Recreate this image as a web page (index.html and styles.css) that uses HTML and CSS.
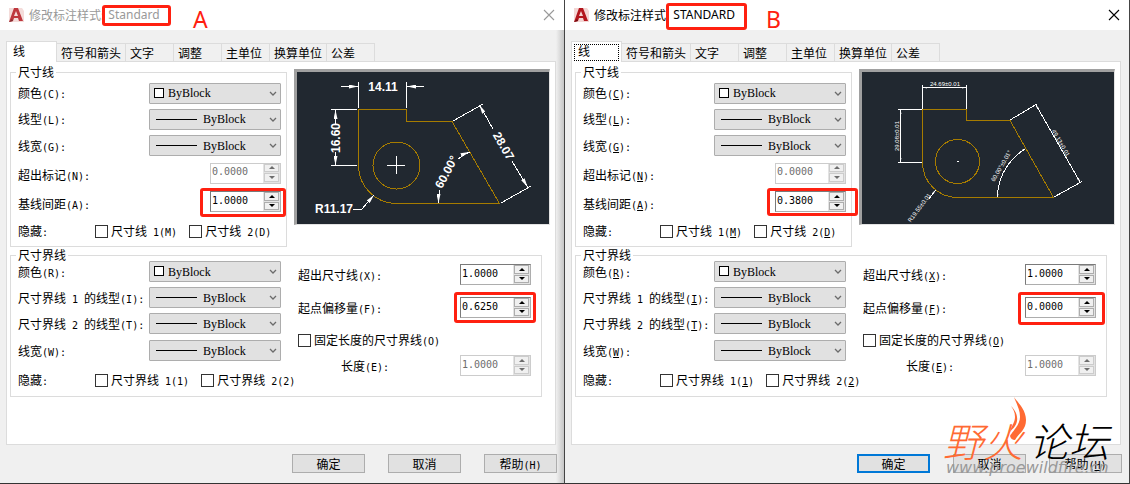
FILE: index.html
```html
<!DOCTYPE html>
<html lang="zh-CN">
<head>
    <meta charset="UTF-8" />
    <title>修改标注样式</title>
    <link rel="stylesheet" href="styles.css">
</head>
<body>
    <!-- shared icons -->
    <svg class="defs" aria-hidden="true">
        <symbol id="logo" viewBox="0 0 16 16">
            <path d="M1 1h13l2 3v11H1z" fill="#f3d6d4"/>
            <path d="M1 15L6 1h4l5 13h-4l-1-3H6l-1 3z" fill="#b3161d"/>
            <path d="M8 4l2 5H6z" fill="#f3d6d4"/>
            <path d="M1 15l3-3 1 2z" fill="#6e0b10"/>
        </symbol>
        <symbol id="chevron" viewBox="0 0 8 6">
            <path d="M1 1l3 3 3-3" fill="none" stroke="#6b6b6b" stroke-width="1.3"/>
        </symbol>
        <symbol id="cross" viewBox="0 0 12 12">
            <path d="M1 1l10 10M11 1L1 11" fill="none" stroke="currentColor" stroke-width="1.1"/>
        </symbol>
        <marker id="arrow" viewBox="0 0 9 4" refX="9" refY="2" markerWidth="9" markerHeight="4" markerUnits="userSpaceOnUse" orient="auto-start-reverse">
            <path d="M0 0l9 2-9 2z" fill="#fff"/>
        </marker>
        <marker id="tick" viewBox="0 0 4 2" refX="4" refY="1" markerWidth="4" markerHeight="2" markerUnits="userSpaceOnUse" orient="auto-start-reverse">
            <path d="M0 0l4 1-4 1z" fill="#fff"/>
        </marker>
    </svg>

    <main class="desktop">
        <section class="dialog inactive">
            <header class="titlebar">
                <svg class="logo"><use href="#logo"/></svg>
                <h1>修改标注样式:</h1>
                <span class="style-name">Standard<i class="mark mark-title"></i></span>
                <span class="letter">A</span>
                <button class="close" aria-label="关闭"><svg><use href="#cross"/></svg></button>
            </header>
            <nav class="tabs">
                <button class="tab current">线</button>
                <button class="tab">符号和箭头</button>
                <button class="tab">文字</button>
                <button class="tab">调整</button>
                <button class="tab">主单位</button>
                <button class="tab">换算单位</button>
                <button class="tab">公差</button>
            </nav>
            <div class="panel">
                <div class="top">
                    <div class="group dim-lines">
                        <h2>尺寸线</h2>
                        <div class="row">
                            <label for="a-color">颜色<span class="en">(C):</span></label>
                            <div class="combo color"><select id="a-color"><option>ByBlock</option></select><i class="swatch"></i><svg><use href="#chevron"/></svg></div>
                        </div>
                        <div class="row">
                            <label for="a-type">线型<span class="en">(L):</span></label>
                            <div class="combo"><select id="a-type"><option>ByBlock</option></select><i class="line"></i><svg><use href="#chevron"/></svg></div>
                        </div>
                        <div class="row">
                            <label for="a-weight">线宽<span class="en">(G):</span></label>
                            <div class="combo"><select id="a-weight"><option>ByBlock</option></select><i class="line"></i><svg><use href="#chevron"/></svg></div>
                        </div>
                        <div class="row low">
                            <label for="a-beyond">超出标记<span class="en">(N):</span></label>
                            <div class="spin off"><input id="a-beyond" type="text" value="0.0000" disabled><div class="steps"><button disabled aria-label="增加"></button><button disabled aria-label="减少"></button></div></div>
                        </div>
                        <div class="row low">
                            <label for="a-base">基线间距<span class="en">(A):</span></label>
                            <div class="spin"><input id="a-base" type="text" value="1.0000"><div class="steps"><button aria-label="增加"></button><button aria-label="减少"></button></div><i class="mark mark-base"></i></div>
                        </div>
                        <div class="row checks">
                            <span class="hide">隐藏<span class="en">:</span></span>
                            <label><input type="checkbox">尺寸线<span class="en"> 1(M)</span></label>
                            <label><input type="checkbox">尺寸线<span class="en"> 2(D)</span></label>
                        </div>
                    </div>
                    <svg class="preview" viewBox="0 0 252 152">
                        <g class="part">
                            <path d="M61.5 93.5V37.5H109.5V49.5H155L202.5 131.5H99.5A38 38 0 0 1 61.5 93.5z"/>
                            <circle cx="99.5" cy="93.5" r="23.5"/>
                        </g>
                        <g class="dims">
                            <path d="M90 93.5h18M99.5 84v18"/>
                            <path d="M61.5 10v26M109.5 10v26M34 37.5h26M34 93.5h26"/>
                            <path d="M44 14.5h17" marker-end="url(#arrow)"/>
                            <path d="M127 14.5h-17" marker-end="url(#arrow)"/>
                            <path d="M38.5 52V38" marker-end="url(#arrow)"/>
                            <path d="M38.5 80v13" marker-end="url(#arrow)"/>
                            <path d="M56 137h9L77 123" marker-end="url(#arrow)"/>
                            <path d="M156 49L186 32M204 131L234 114"/>
                            <path d="M196 57L182.5 33" marker-end="url(#arrow)"/>
                            <path d="M215 89L230.5 115" marker-end="url(#arrow)"/>
                            <path d="M143 118Q141.5 124 141.5 131" marker-end="url(#arrow)"/>
                            <path d="M161 87Q167 82 172.5 80" marker-end="url(#arrow)"/>
                        </g>
                        <g class="big">
                            <text x="86" y="19">14.11</text>
                            <text transform="translate(43 66) rotate(-90)">16.60</text>
                            <text x="37" y="141">R11.17</text>
                            <text transform="translate(203 76) rotate(60)">28.07</text>
                            <text transform="translate(153 102) rotate(-62)">60.00°</text>
                        </g>
                    </svg>
                </div>
                <div class="group ext-lines">
                    <h2>尺寸界线</h2>
                    <div class="col">
                        <div class="row">
                            <label for="a-ecolor">颜色<span class="en">(R):</span></label>
                            <div class="combo color"><select id="a-ecolor"><option>ByBlock</option></select><i class="swatch"></i><svg><use href="#chevron"/></svg></div>
                        </div>
                        <div class="row">
                            <label for="a-etype1">尺寸界线<span class="en"> 1 </span>的线型<span class="en">(I):</span></label>
                            <div class="combo"><select id="a-etype1"><option>ByBlock</option></select><i class="line"></i><svg><use href="#chevron"/></svg></div>
                        </div>
                        <div class="row">
                            <label for="a-etype2">尺寸界线<span class="en"> 2 </span>的线型<span class="en">(T):</span></label>
                            <div class="combo"><select id="a-etype2"><option>ByBlock</option></select><i class="line"></i><svg><use href="#chevron"/></svg></div>
                        </div>
                        <div class="row">
                            <label for="a-eweight">线宽<span class="en">(W):</span></label>
                            <div class="combo"><select id="a-eweight"><option>ByBlock</option></select><i class="line"></i><svg><use href="#chevron"/></svg></div>
                        </div>
                        <div class="row checks">
                            <span class="hide">隐藏<span class="en">:</span></span>
                            <label><input type="checkbox">尺寸界线<span class="en"> 1(1)</span></label>
                            <label><input type="checkbox">尺寸界线<span class="en"> 2(2)</span></label>
                        </div>
                    </div>
                    <div class="col offsets">
                        <div class="row">
                            <label for="a-extend">超出尺寸线<span class="en">(X):</span></label>
                            <div class="spin"><input id="a-extend" type="text" value="1.0000"><div class="steps"><button aria-label="增加"></button><button aria-label="减少"></button></div></div>
                        </div>
                        <div class="row">
                            <label for="a-offset">起点偏移量<span class="en">(F):</span></label>
                            <div class="spin"><input id="a-offset" type="text" value="0.6250"><div class="steps"><button aria-label="增加"></button><button aria-label="减少"></button></div><i class="mark mark-offset"></i></div>
                        </div>
                        <div class="row checks">
                            <label><input type="checkbox">固定长度的尺寸界线<span class="en">(O)</span></label>
                        </div>
                        <div class="row indent">
                            <label for="a-length">长度<span class="en">(E):</span></label>
                            <div class="spin off"><input id="a-length" type="text" value="1.0000" disabled><div class="steps"><button disabled aria-label="增加"></button><button disabled aria-label="减少"></button></div></div>
                        </div>
                    </div>
                </div>
            </div>
            <footer class="buttons">
                <button>确定</button>
                <button>取消</button>
                <button>帮助<span class="en">(H)</span></button>
            </footer>
        </section>

        <section class="dialog active">
            <header class="titlebar">
                <svg class="logo"><use href="#logo"/></svg>
                <h1>修改标注样式:</h1>
                <span class="style-name">STANDARD<i class="mark mark-title"></i></span>
                <span class="letter">B</span>
                <button class="close" aria-label="关闭"><svg><use href="#cross"/></svg></button>
            </header>
            <nav class="tabs">
                <button class="tab current">线</button>
                <button class="tab">符号和箭头</button>
                <button class="tab">文字</button>
                <button class="tab">调整</button>
                <button class="tab">主单位</button>
                <button class="tab">换算单位</button>
                <button class="tab">公差</button>
            </nav>
            <div class="panel">
                <div class="top">
                    <div class="group dim-lines">
                        <h2>尺寸线</h2>
                        <div class="row">
                            <label for="b-color">颜色<span class="en">(<u>C</u>):</span></label>
                            <div class="combo color"><select id="b-color"><option>ByBlock</option></select><i class="swatch"></i><svg><use href="#chevron"/></svg></div>
                        </div>
                        <div class="row">
                            <label for="b-type">线型<span class="en">(<u>L</u>):</span></label>
                            <div class="combo"><select id="b-type"><option>ByBlock</option></select><i class="line"></i><svg><use href="#chevron"/></svg></div>
                        </div>
                        <div class="row">
                            <label for="b-weight">线宽<span class="en">(<u>G</u>):</span></label>
                            <div class="combo"><select id="b-weight"><option>ByBlock</option></select><i class="line"></i><svg><use href="#chevron"/></svg></div>
                        </div>
                        <div class="row low">
                            <label for="b-beyond">超出标记<span class="en">(<u>N</u>):</span></label>
                            <div class="spin off"><input id="b-beyond" type="text" value="0.0000" disabled><div class="steps"><button disabled aria-label="增加"></button><button disabled aria-label="减少"></button></div></div>
                        </div>
                        <div class="row low">
                            <label for="b-base">基线间距<span class="en">(<u>A</u>):</span></label>
                            <div class="spin"><input id="b-base" type="text" value="0.3800"><div class="steps"><button aria-label="增加"></button><button aria-label="减少"></button></div><i class="mark mark-base"></i></div>
                        </div>
                        <div class="row checks">
                            <span class="hide">隐藏<span class="en">:</span></span>
                            <label><input type="checkbox">尺寸线<span class="en"> 1(<u>M</u>)</span></label>
                            <label><input type="checkbox">尺寸线<span class="en"> 2(<u>D</u>)</span></label>
                        </div>
                    </div>
                    <svg class="preview" viewBox="0 0 252 152">
                        <g class="part">
                            <path d="M60.5 90.5V37.5H104.5V48.5H148L191.5 125.5H95.5A35 35 0 0 1 60.5 90.5z"/>
                            <circle cx="95.5" cy="89.5" r="22"/>
                        </g>
                        <g class="dims">
                            <path d="M95 89.5h1.5"/>
                            <path d="M60.5 13v24M104.5 13v24M36 37.5h24M36 90.5h24"/>
                            <path d="M61 15.5h43" marker-start="url(#tick)" marker-end="url(#tick)"/>
                            <path d="M38.5 38v52" marker-start="url(#tick)" marker-end="url(#tick)"/>
                            <path d="M148 48L175 32M192 125L220 109.5"/>
                            <path d="M174 33L218 110" marker-start="url(#tick)" marker-end="url(#tick)"/>
                            <path d="M135.5 125.5Q136 95 163.5 76.5" marker-start="url(#tick)" marker-end="url(#tick)"/>
                            <path d="M67 127L73.5 118" marker-end="url(#tick)"/>
                        </g>
                        <g class="small">
                            <text x="83" y="14">24.69±0.01</text>
                            <text transform="translate(37 64) rotate(-90)">29.08±0.01</text>
                            <text transform="translate(197 72) rotate(60)">49.13±0.01</text>
                            <text transform="translate(141 95) rotate(-60)">60.00°±0.01°</text>
                            <text transform="translate(59 137) rotate(-53)">R19.55±0.01</text>
                        </g>
                    </svg>
                </div>
                <div class="group ext-lines">
                    <h2>尺寸界线</h2>
                    <div class="col">
                        <div class="row">
                            <label for="b-ecolor">颜色<span class="en">(<u>R</u>):</span></label>
                            <div class="combo color"><select id="b-ecolor"><option>ByBlock</option></select><i class="swatch"></i><svg><use href="#chevron"/></svg></div>
                        </div>
                        <div class="row">
                            <label for="b-etype1">尺寸界线<span class="en"> 1 </span>的线型<span class="en">(<u>I</u>):</span></label>
                            <div class="combo"><select id="b-etype1"><option>ByBlock</option></select><i class="line"></i><svg><use href="#chevron"/></svg></div>
                        </div>
                        <div class="row">
                            <label for="b-etype2">尺寸界线<span class="en"> 2 </span>的线型<span class="en">(<u>T</u>):</span></label>
                            <div class="combo"><select id="b-etype2"><option>ByBlock</option></select><i class="line"></i><svg><use href="#chevron"/></svg></div>
                        </div>
                        <div class="row">
                            <label for="b-eweight">线宽<span class="en">(<u>W</u>):</span></label>
                            <div class="combo"><select id="b-eweight"><option>ByBlock</option></select><i class="line"></i><svg><use href="#chevron"/></svg></div>
                        </div>
                        <div class="row checks">
                            <span class="hide">隐藏<span class="en">:</span></span>
                            <label><input type="checkbox">尺寸界线<span class="en"> 1(<u>1</u>)</span></label>
                            <label><input type="checkbox">尺寸界线<span class="en"> 2(<u>2</u>)</span></label>
                        </div>
                    </div>
                    <div class="col offsets">
                        <div class="row">
                            <label for="b-extend">超出尺寸线<span class="en">(<u>X</u>):</span></label>
                            <div class="spin"><input id="b-extend" type="text" value="1.0000"><div class="steps"><button aria-label="增加"></button><button aria-label="减少"></button></div></div>
                        </div>
                        <div class="row">
                            <label for="b-offset">起点偏移量<span class="en">(<u>F</u>):</span></label>
                            <div class="spin"><input id="b-offset" type="text" value="0.0000"><div class="steps"><button aria-label="增加"></button><button aria-label="减少"></button></div><i class="mark mark-offset"></i></div>
                        </div>
                        <div class="row checks">
                            <label><input type="checkbox">固定长度的尺寸界线<span class="en">(<u>O</u>)</span></label>
                        </div>
                        <div class="row indent">
                            <label for="b-length">长度<span class="en">(<u>E</u>):</span></label>
                            <div class="spin off"><input id="b-length" type="text" value="1.0000" disabled><div class="steps"><button disabled aria-label="增加"></button><button disabled aria-label="减少"></button></div></div>
                        </div>
                    </div>
                </div>
            </div>
            <footer class="buttons">
                <button class="default">确定</button>
                <button>取消</button>
                <button>帮助<span class="en">(<u>H</u>)</span></button>
            </footer>

            <div class="watermark">
                <div class="brand"><span class="fire">野火</span><span>论坛</span></div>
                <div class="site">www.proewildfire.cn</div>
                <svg class="flame" viewBox="0 0 18 44">
                    <path d="M5 0C8 5 17 12 17 23C17 33 10 36 6 43Q2 43 1 39C3 35 11 28 11 20C11 12 7 6 5 0z" fill="#ff6a33"/>
                    <path d="M2 9C6 13 9 18 8 24C7 30 3 32 1 35C2 29 6 26 6 20C6 15 4 12 2 9z" fill="#ff6a33"/>
                </svg>
            </div>
        </section>
    </main>
</body>
</html>
```
FILE: styles.css
```css
* {
    box-sizing: border-box;
}
body {
    margin: 0;
    font-family: "Noto Sans CJK SC", sans-serif;
    font-size: 12px;
    line-height: 16px;
    color: #000;
    background-color: #f0f0f0;
}
button, input, select {
    font: inherit;
    color: inherit;
    margin: 0;
    padding: 0;
}
h1, h2 {
    margin: 0;
    font-size: 12px;
    font-weight: normal;
}
.defs {
    position: absolute;
    width: 0;
    height: 0;
}
.en {
    font-family: "DejaVu Sans Mono", monospace;
    font-size: 10px;
    line-height: 12px;
    white-space: pre;
}
.desktop {
    display: grid;
    grid-template-columns: 1fr 1fr;
}
.dialog {
    position: relative;
    background-color: #f0f0f0;
    border-right: 1px solid #444;
    border-bottom: 1px solid #333;
}
.inactive {
    background-image: linear-gradient(to left, #c6c6c6, #f0f0f0 8px);
}

/* title bar */
.titlebar {
    position: relative;
    display: flex;
    align-items: center;
    height: 30px;
    padding: 0 9px 0 8px;
    background-color: #fff;
}
.logo {
    width: 16px;
    height: 16px;
    margin-right: 5px;
}
.inactive .logo {
    opacity: 0.85;
}
.style-name {
    position: relative;
    margin-left: 4px;
    font-family: "Noto Sans", sans-serif;
}
.inactive .titlebar {
    color: #999;
}
.close {
    margin-left: auto;
    width: 12px;
    height: 12px;
    border: none;
    background: none;
}
.close svg {
    display: block;
    width: 12px;
    height: 12px;
}
.letter {
    position: absolute;
    left: 193px;
    top: 7px;
    font-family: "Noto Sans", sans-serif;
    font-size: 23px;
    line-height: 24px;
    color: #ff2010;
}
.active .letter {
    left: 201px;
}

/* red frames */
.mark {
    position: absolute;
    border: 3px solid #ff2010;
    border-radius: 3px;
    pointer-events: none;
}
.mark-title {
    inset: -2px -11px -3px -6px;
}
.mark-base {
    inset: -4px -6px -6px -11px;
}
.mark-offset {
    inset: -6px -6px -6px -7px;
}
.active .mark-title {
    inset: -4px -12px -7px -7px;
}
.active .mark-base {
    inset: -4px -13px -5px -9px;
}
.active .mark-offset {
    inset: -6px -10px -8px -8px;
}

/* tabs */
.tabs {
    display: flex;
    align-items: flex-end;
    padding: 11px 6px 0;
}
.tab {
    min-width: 48px;
    height: 18px;
    padding: 0 4px;
    text-align: left;
    background-color: #f0f0f0;
    border: 1px solid #dcdcdc;
    border-width: 1px 1px 0 0;
}
.tab.current {
    position: relative;
    width: 51px;
    height: 21px;
    margin-bottom: -1px;
    padding: 0 6px 3px;
    background-color: #fff;
    border-left-width: 1px;
}
.active .tab.current::after {
    content: "";
    position: absolute;
    inset: 2px 2px 1px 2px;
    border: 1px dotted #000;
}
.panel {
    margin: 0 8px 0 6px;
    padding: 7px 5px 47px 3px;
    background-color: #fff;
    border: 1px solid #dcdcdc;
}
.top {
    display: flex;
    align-items: flex-start;
    justify-content: space-between;
}

/* groups */
.group {
    position: relative;
    border: 1px solid #dcdcdc;
}
.group h2 {
    position: absolute;
    left: 5px;
    top: -9px;
    padding: 0 2px;
    background-color: #fff;
}
.dim-lines {
    display: grid;
    grid-template-rows: 26px 26px 27px 28px 29px 30px;
    width: 277px;
    margin-top: 3px;
    padding: 7px 5px 0 7px;
}
.ext-lines {
    display: flex;
    justify-content: space-between;
    margin: 8px 8px 0 0;
    padding: 2px 10px 0 7px;
}
.col {
    display: grid;
    grid-template-columns: 100%;
    grid-template-rows: 27px 25px 27px 27px 32px;
    width: 263px;
}
.offsets {
    grid-template-rows: 33px 33px 31px 21px;
    width: 233px;
}
.row {
    display: flex;
    align-items: center;
    justify-content: space-between;
}
.row label {
    white-space: nowrap;
}
.low > label {
    padding-top: 4px;
}
.indent {
    padding-left: 43px;
}

/* drop-downs */
.combo {
    position: relative;
    width: 132px;
    height: 21px;
}
.combo select {
    display: block;
    width: 100%;
    height: 21px;
    padding-left: 53px;
    appearance: none;
    font-family: "Liberation Serif", serif;
    background-color: #e1e1e1;
    border: 1px solid #adadad;
    border-radius: 1px;
}
.combo.color select {
    padding-left: 18px;
}
.combo svg {
    position: absolute;
    right: 4px;
    top: 8px;
    width: 8px;
    height: 6px;
    pointer-events: none;
}
.line {
    position: absolute;
    left: 7px;
    top: 10px;
    width: 41px;
    height: 1px;
    background-color: #000;
}
.swatch {
    position: absolute;
    left: 5px;
    top: 5px;
    width: 10px;
    height: 10px;
    background-color: #fff;
    border: 1px solid #000;
}

/* number boxes */
.spin {
    position: relative;
    display: flex;
    width: 71px;
    height: 21px;
    background-color: #fff;
    border: 1px solid #7a7a7a;
    border-right-color: #adadad;
    border-bottom-color: #adadad;
}
.spin input {
    flex: 1;
    min-width: 0;
    padding: 0 0 2px 1px;
    font-family: "DejaVu Sans Mono", monospace;
    font-size: 10px;
    border: none;
    background: none;
}
.steps {
    display: grid;
    gap: 1px;
    width: 17px;
    padding: 0 1px 1px;
    background-color: #e3e3e3;
}
.steps button {
    display: flex;
    align-items: center;
    justify-content: center;
    background-color: #f0f0f0;
    border: 1px solid #adadad;
}
.steps button::before {
    content: "";
    border: 3px solid transparent;
    border-top-width: 0;
    border-bottom-color: #000;
}
.steps button:last-child::before {
    border-top: 3px solid #000;
    border-bottom: none;
}
.off {
    color: #6d6d6d;
    border-color: #ccc;
}
.off button {
    border-color: #ccc;
}
.off button::before {
    border-bottom-color: #6d6d6d;
}
.off button:last-child::before {
    border-top-color: #6d6d6d;
}

/* check boxes */
.checks {
    justify-content: flex-start;
    gap: 12px;
}
.checks input {
    width: 13px;
    height: 13px;
    margin-right: 3px;
    vertical-align: -2px;
    appearance: none;
    background-color: #fff;
    border: 1px solid #333;
}
.hide {
    flex: none;
    width: 65px;
}

/* preview drawing */
.preview {
    width: 256px;
    height: 156px;
    background-color: #212830;
    border: 1px solid #e3e3e3;
    border-top: 3px solid #a0a0a0;
    border-left: 3px solid #a0a0a0;
    shape-rendering: crispEdges;
}
.part {
    fill: none;
    stroke: #a67c00;
}
.dims {
    fill: none;
    stroke: #fff;
}
.preview text {
    fill: #fff;
    text-anchor: middle;
    font-family: "Liberation Sans", sans-serif;
}
.big text {
    font-size: 12px;
    font-weight: bold;
}
.small text {
    font-size: 6px;
}

/* bottom buttons */
.buttons {
    display: flex;
    justify-content: flex-end;
    gap: 23px;
    padding: 9px 7px 10px;
}
.buttons button {
    width: 73px;
    height: 19px;
    line-height: 15px;
    background-color: #e1e1e1;
    border: 1px solid #adadad;
}
.buttons .default {
    border: 2px solid #0078d7;
}

/* forum watermark */
.watermark {
    position: absolute;
    right: 20px;
    bottom: 7px;
    width: 166px;
    pointer-events: none;
}
.brand {
    display: flex;
    justify-content: space-between;
    font-size: 40px;
    font-weight: 300;
    font-style: italic;
    line-height: 40px;
}
.fire {
    color: #ff6a33;
}
.site {
    padding-left: 3px;
    font-family: "DejaVu Sans", sans-serif;
    font-size: 16px;
    font-style: italic;
    line-height: 16px;
    color: #999;
}
.flame {
    position: absolute;
    left: 66px;
    top: -23px;
    width: 18px;
    height: 44px;
}
```
